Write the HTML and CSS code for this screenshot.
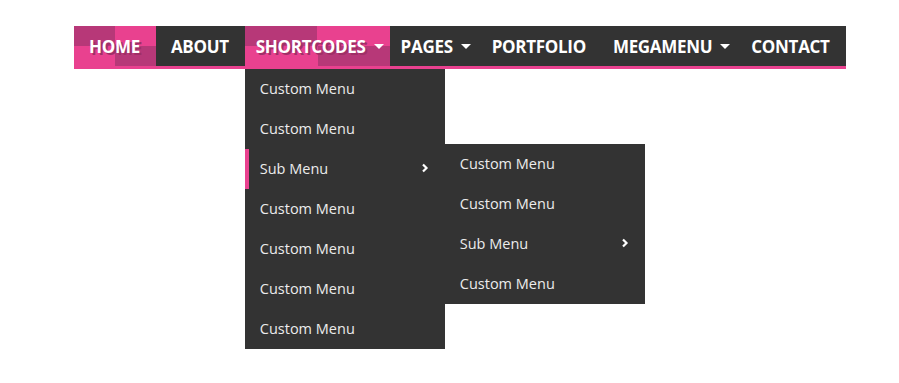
FILE: index.html
```html
<!DOCTYPE html>
<html lang="en">
<head>
    <meta charset="UTF-8">
    <meta name="viewport" content="width=device-width, initial-scale=1.0">
    <title>Menu</title>
    <link rel="stylesheet" href="styles.css">
</head>
<body>

<div class="page">
    <ul class="nav">
        <li class="nav-item active"><a href="#">Home</a></li>
        <li class="nav-item"><a href="#">About</a></li>
        <li class="nav-item has-sub active">
            <a href="#">Shortcodes <span class="caret"></span></a>
            <ul class="dropdown">
                <li><a href="#">Custom Menu</a></li>
                <li><a href="#">Custom Menu</a></li>
                <li class="sub open">
                    <a href="#">Sub Menu
                        <svg class="chev" width="8" height="10" viewBox="0 0 8 10"><polyline points="2,1.5 5.5,5 2,8.5" fill="none" stroke="#fff" stroke-width="2.2"/></svg>
                    </a>
                    <ul class="dropdown side">
                        <li><a href="#">Custom Menu</a></li>
                        <li><a href="#">Custom Menu</a></li>
                        <li class="sub">
                            <a href="#">Sub Menu
                                <svg class="chev" width="8" height="10" viewBox="0 0 8 10"><polyline points="2,1.5 5.5,5 2,8.5" fill="none" stroke="#fff" stroke-width="2.2"/></svg>
                            </a>
                        </li>
                        <li><a href="#">Custom Menu</a></li>
                    </ul>
                </li>
                <li><a href="#">Custom Menu</a></li>
                <li><a href="#">Custom Menu</a></li>
                <li><a href="#">Custom Menu</a></li>
                <li><a href="#">Custom Menu</a></li>
            </ul>
        </li>
        <li class="nav-item has-sub"><a href="#">Pages <span class="caret"></span></a></li>
        <li class="nav-item"><a href="#">Portfolio</a></li>
        <li class="nav-item has-sub"><a href="#">Megamenu <span class="caret"></span></a></li>
        <li class="nav-item"><a href="#">Contact</a></li>
    </ul>
</div>

</body>
</html>
```

FILE: styles.css
```css
html, body {
    height: 100%;
}
body {
    margin: 0;
    background: #fff;
    font-family: 'Open Sans', 'DejaVu Sans', sans-serif;
}
ul {
    list-style: none;
    margin: 0;
    padding: 0;
}
a {
    text-decoration: none;
    color: inherit;
}
.page {
    min-height: 383px;
    box-sizing: border-box;
    padding: 26px 0 0 74px;
}
.nav {
    display: inline-flex;
    position: relative;
    background: #333;
    border-bottom: 3px solid #e9418f;
}
.nav-item {
    position: relative;
}
.nav-item > a {
    display: flex;
    align-items: center;
    height: 40px;
    padding: 0 16px 0 15px;
    color: #fff;
    font-size: 17px;
    font-weight: 700;
    text-transform: uppercase;
    letter-spacing: -0.3px;
}
.nav-item.has-sub > a {
    padding: 0 6px 0 11px;
}
.nav-item.active > a {
    background: conic-gradient(#e9418f 0 25%, #b73878 0 50%, #e9418f 0 75%, #b73878 0);
    text-shadow: 2px 2px 0 #a02f67;
}
.caret {
    display: inline-block;
    width: 0;
    height: 0;
    margin-left: 8px;
    border-left: 5px solid transparent;
    border-right: 5px solid transparent;
    border-top: 5px solid #fff;
}
.dropdown {
    position: absolute;
    top: 43px;
    left: 0;
    width: 200px;
    background: #333;
    z-index: 10;
}
.dropdown li {
    position: relative;
}
.dropdown a {
    display: flex;
    align-items: center;
    justify-content: space-between;
    box-sizing: border-box;
    height: 40px;
    padding: 0 16px 2px 15px;
    color: #ececec;
    font-size: 14.5px;
}
.dropdown .open > a {
    box-shadow: inset 4px 0 0 #e9418f;
}
.dropdown.side {
    top: -5px;
    left: 100%;
}
.chev {
    display: block;
}
```
